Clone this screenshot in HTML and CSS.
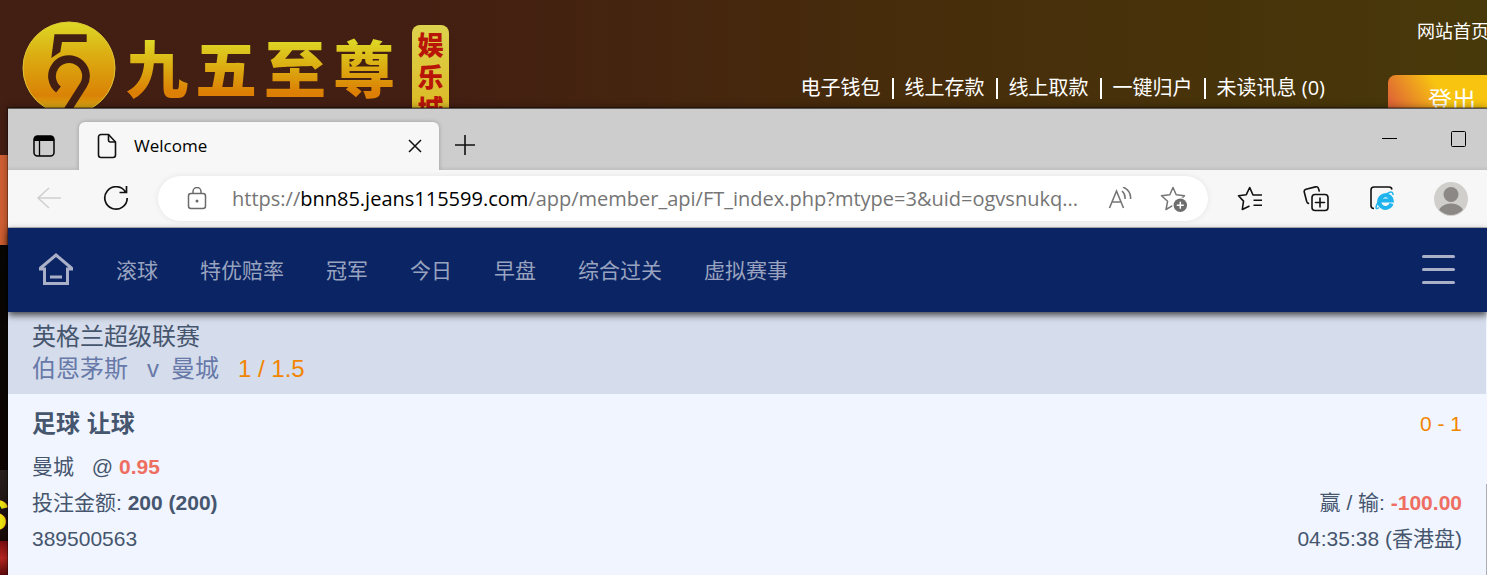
FILE: index.html
```html
<!DOCTYPE html>
<html lang="zh-CN">
<head>
  <meta charset="UTF-8" />
  <meta name="viewport" content="width=device-width, initial-scale=1.0"/>
  <title>Welcome</title>
  <link rel="stylesheet" href="styles.css">
</head>
<body>
  <!-- site behind the window -->
  <header class="site-header">
    <div class="logo">
      <svg class="logo-mark" viewBox="0 0 94 94" aria-hidden="true">
        <defs>
          <linearGradient id="gold" x1="0" y1="0" x2="0" y2="1">
            <stop offset="0" stop-color="#ddd926"/>
            <stop offset="0.35" stop-color="#dcae12"/>
            <stop offset="0.8" stop-color="#da8205"/>
            <stop offset="1" stop-color="#dbbd1c"/>
          </linearGradient>
        </defs>
        <circle cx="47" cy="47" r="46" fill="url(#gold)" stroke="#dfc636" stroke-width="1"/>
        <path d="M32.500 13.300H64.700V21H40L38.300 31L29.300 37z" fill="#431e12"/>
        <path d="M36.500 68.500A17 17 0 1 1 61.500 64L43 93" fill="none" stroke="#431e12" stroke-width="7.700"/>
      </svg>
      <div class="logo-name"><span>九</span><span>五</span><span>至</span><span>尊</span></div>
      <div class="logo-tag"><span>娱</span><span>乐</span><span>城</span></div>
    </div>
    <div class="site-right">
      <a class="site-home" href="#">网站首页</a>
      <div class="account-row">
        <nav class="account-links">
          <a href="#">电子钱包</a>
          <a href="#">线上存款</a>
          <a href="#">线上取款</a>
          <a href="#">一键归户</a>
          <a href="#">未读讯息 (0)</a>
        </nav>
        <button class="logout" type="button">登出</button>
      </div>
    </div>
  </header>
  <div class="site-banner"></div>
  <div class="site-body">
    <div class="promo"><span>S</span></div>
    <div class="promo-foot"></div>
  </div>

  <!-- browser window -->
  <div class="window">
    <div class="tab-strip">
      <button class="tab-menu" type="button" aria-label="Tab actions">
        <svg width="22" height="22" viewBox="0 0 22 22">
          <rect x="1" y="1" width="20" height="20" rx="3.500" fill="none" stroke="#000" stroke-width="1.500"/>
          <path d="M1 6V4a3 3 0 0 1 3-3h14a3 3 0 0 1 3 3v2z"/>
          <path d="M6.500 6v15" stroke="#000" stroke-width="1.300"/>
        </svg>
      </button>
      <div class="tab">
        <svg width="20" height="26" viewBox="0 0 20 26" fill="none" stroke="#111" stroke-width="1.600" stroke-linejoin="round">
          <path d="M4 1.500H11.500L18.500 9V22a2.500 2.500 0 0 1-2.500 2.500H4A2.500 2.500 0 0 1 1.500 22V4A2.500 2.500 0 0 1 4 1.500z"/>
          <path d="M11.500 1.500V7a2 2 0 0 0 2 2h5"/>
        </svg>
        <span class="tab-title">Welcome</span>
        <button class="tab-close" type="button" aria-label="Close tab">
          <svg width="14" height="14" viewBox="0 0 14 14" stroke="#111" stroke-width="1.500"><path d="M1 1l12 12M13 1L1 13"/></svg>
        </button>
      </div>
      <button class="new-tab" type="button" aria-label="New tab">
        <svg width="22" height="22" viewBox="0 0 22 22" stroke="#111" stroke-width="1.600"><path d="M11 1v20M1 11h20"/></svg>
      </button>
      <div class="window-buttons">
        <button type="button" aria-label="Minimize">
          <svg width="16" height="16" viewBox="0 0 16 16" stroke="#000"><path d="M0 7.500h15"/></svg>
        </button>
        <button type="button" aria-label="Maximize">
          <svg width="16" height="16" viewBox="0 0 16 16" fill="none" stroke="#000"><rect x="0.500" y="0.500" width="14" height="15" rx="1"/></svg>
        </button>
      </div>
    </div>

    <div class="toolbar">
      <button class="tool back" type="button" aria-label="Back" disabled>
        <svg width="26" height="24" viewBox="0 0 26 24" fill="none" stroke="#cfcfcf" stroke-width="1.500"><path d="M25 11H2M13 1L2 11L13 21"/></svg>
      </button>
      <button class="tool reload" type="button" aria-label="Refresh">
        <svg width="26" height="26" viewBox="0 0 26 26" fill="none" stroke="#111" stroke-width="1.700"><path d="M22.500 6A11.200 11.200 0 1 0 24.200 12M23.500 0V6.500H16.500"/></svg>
      </button>
      <div class="address-bar">
        <svg width="20" height="24" viewBox="0 0 20 24" fill="none" stroke="#6b6b6b" stroke-width="1.500">
          <rect x="1.500" y="6.500" width="17" height="15" rx="2.500"/>
          <path d="M6 6.500V4.500a4 4 0 0 1 8 0v2"/>
          <circle cx="10" cy="14" r="1.500" fill="#6b6b6b" stroke="none"/>
        </svg>
        <div class="url">https://<b>bnn85.jeans115599.com</b>/app/member_api/FT_index.php?mtype=3&amp;uid=ogvsnukq...</div>
        <button class="bar-button" type="button" aria-label="Read aloud">
          <svg width="26" height="24" viewBox="0 0 26 24" fill="none" stroke="#757575" stroke-width="1.600">
            <path d="M2.500 21L9.500 4L16.500 21M5 15H14"/>
            <path d="M15 4Q18.500 7 18 12M16 0Q24.500 4 23.500 12"/>
          </svg>
        </button>
        <button class="bar-button" type="button" aria-label="Add to favorites">
          <svg width="28" height="28" viewBox="0 0 28 28">
            <path d="M13 2.500L16.200 9.800L24.500 10.700L18.500 16.300L20 24.500L13 20.300L6 24.500L7.600 16.300L1.500 10.700L9.800 9.800z" fill="none" stroke="#757575" stroke-width="1.500" stroke-linejoin="round"/>
            <circle cx="20.300" cy="20.300" r="8" fill="#fff"/>
            <circle cx="20.300" cy="20.300" r="6.700" fill="#6e6e6e"/>
            <path d="M20.300 16.800v7M16.800 20.300h7" stroke="#fff" stroke-width="1.500"/>
          </svg>
        </button>
      </div>
      <div class="tools">
        <button class="tool" type="button" aria-label="Favorites">
          <svg width="26" height="26" viewBox="0 0 26 26" fill="none" stroke="#111" stroke-width="1.600" stroke-linejoin="round">
            <path d="M12.500 20L5.300 23.500L6.500 15.100L1.500 9.800L9.300 8.700L12.700 1.500L16 9H25M16.500 14.300H25M16.500 19.300H25"/>
          </svg>
        </button>
        <button class="tool" type="button" aria-label="Collections">
          <svg width="26" height="26" viewBox="0 0 26 26" fill="none" stroke="#111" stroke-width="1.600" stroke-linecap="round">
            <path d="M5.500 17.500C4.500 17 4 16.500 3.700 15.500L1.300 6.200A2.500 2.500 0 0 1 3 3.200L12.500 0.900A2.500 2.500 0 0 1 15.500 2.600L16.200 5"/>
            <rect x="9" y="8.500" width="16" height="16" rx="3"/>
            <path d="M17 12v9M12.500 16.500h9"/>
          </svg>
        </button>
        <button class="tool" type="button" aria-label="Internet Explorer mode">
          <svg width="26" height="26" viewBox="0 0 26 26" fill="none">
            <path d="M5 22.500C3 22.500 2 21.500 2 19.500V4A3 3 0 0 1 5 1H20A3 3 0 0 1 23 3.500" stroke="#111" stroke-width="1.600"/>
            <path d="M22.500 17.500A6.300 6.300 0 1 1 22.700 14.500H11" stroke="#1fb4ee" stroke-width="4"/>
            <path d="M10 21.500C5.500 25 6 19.500 12 12.500C17.500 6.500 24.500 3.500 24 9" stroke="#1fb4ee" stroke-width="1.500"/>
          </svg>
        </button>
        <button class="tool profile" type="button" aria-label="Profile">
          <svg width="34" height="34" viewBox="0 0 34 34">
            <defs><clipPath id="face"><circle cx="17" cy="17" r="16"/></clipPath></defs>
            <circle cx="17" cy="17" r="17" fill="#d1cfcc"/>
            <g fill="#8c8885" clip-path="url(#face)"><circle cx="17" cy="12.500" r="7.500"/><ellipse cx="17" cy="32" rx="13" ry="10.500"/></g>
          </svg>
        </button>
      </div>
    </div>

    <div class="page">
      <nav class="main-nav">
        <a class="home" href="#" aria-label="首页">
          <svg width="36" height="34" viewBox="0 0 36 34" fill="none" stroke="#a9b0c8" stroke-width="3">
            <path d="M1 16H6.500V30.500H29.500V16H35M2 15.500L18 2L34 15.500M12 24H24"/>
          </svg>
        </a>
        <a href="#">滚球</a>
        <a href="#">特优赔率</a>
        <a href="#">冠军</a>
        <a href="#">今日</a>
        <a href="#">早盘</a>
        <a href="#">综合过关</a>
        <a href="#">虚拟赛事</a>
        <button class="menu" type="button" aria-label="菜单"><i></i><i></i><i></i></button>
      </nav>

      <section class="match">
        <div class="league">英格兰超级联赛</div>
        <div class="teams"><span>伯恩茅斯</span><span>v</span><span>曼城</span><span class="line">1 / 1.5</span></div>
      </section>

      <section class="bet">
        <div class="row bet-title"><h2>足球 让球</h2><span class="score">0 - 1</span></div>
        <div class="row"><span class="pick">曼城 <span>@ <b class="red">0.95</b></span></span></div>
        <div class="row"><span>投注金额: <b>200 (200)</b></span><span>赢 / 输: <b class="red">-100.00</b></span></div>
        <div class="row"><span>389500563</span><span>04:35:38 (香港盘)</span></div>
      </section>
      <div class="scroll-thumb"></div>
    </div>
  </div>
</body>
</html>
```
FILE: styles.css
```css
* {
  margin: 0;
  padding: 0;
  box-sizing: border-box;
}

body {
  position: relative;
  height: 100vh;
  overflow: hidden;
  display: flex;
  flex-direction: column;
  background-color: #0a0603;
  font-family: "Liberation Sans", "Noto Sans CJK SC", sans-serif;
}

a {
  color: inherit;
  text-decoration: none;
}

button {
  border: none;
  background: none;
  font: inherit;
  color: inherit;
}

svg {
  display: block;
  flex: none;
}

/* site behind */
.site-header {
  height: 155px;
  flex: none;
  display: flex;
  justify-content: space-between;
  align-items: flex-start;
  padding-left: 22px;
  background: linear-gradient(to right, #431e12 0%, #431e12 28%, #472d0b 62%, #48390a 100%);
  color: #fff;
}

.logo {
  display: flex;
  align-items: flex-start;
  padding-top: 21px;
}

.logo-mark {
  width: 94px;
  height: 94px;
}

.logo-name {
  display: flex;
  gap: 7px;
  margin-left: 10px;
  padding-top: 12px;
  font-family: "Noto Sans CJK SC", sans-serif;
  font-size: 62px;
  font-weight: 900;
  line-height: 66px;
}

.logo-name span {
  background: linear-gradient(#ddd926 10%, #dcae12 50%, #dc7f04 90%);
  -webkit-background-clip: text;
  background-clip: text;
  color: transparent;
}

.logo-tag {
  display: flex;
  flex-direction: column;
  align-items: center;
  width: 37px;
  margin-left: 17px;
  margin-top: 4px;
  padding: 3px 0;
  border-radius: 8px;
  background: linear-gradient(#ddd34e, #dcb41c);
  color: #b81408;
  font-family: "Noto Sans CJK SC", sans-serif;
  font-size: 26px;
  font-weight: 900;
  line-height: 32px;
}

.site-right {
  display: flex;
  flex-direction: column;
  align-items: flex-end;
  margin-right: -29px;
  padding-top: 20px;
  white-space: nowrap;
}

.site-home {
  padding-right: 27px;
  font-size: 18px;
  line-height: 24px;
}

.account-row {
  display: flex;
  align-items: flex-start;
  gap: 63px;
  margin-top: 31px;
}

.account-links {
  display: flex;
  align-items: center;
  font-family: "Open Sans", "Noto Sans CJK SC", sans-serif;
  font-size: 20px;
  line-height: 26px;
}

.account-links a + a {
  display: flex;
  align-items: center;
}

.account-links a + a::before {
  content: "";
  width: 2px;
  height: 21px;
  margin: 0 11px;
  background-color: #fff;
}

.logout {
  width: 128px;
  height: 46px;
  padding-left: 40px;
  border-radius: 8px;
  background: linear-gradient(60deg, #de6535 8%, #f8c410 45%);
  text-align: left;
  font-size: 24px;
}

.site-banner {
  height: 90px;
  flex: none;
  background-color: #d06032;
}

.site-body {
  flex: 1;
  display: flex;
  flex-direction: column;
  justify-content: flex-end;
  width: 8px;
  overflow: hidden;
  background: linear-gradient(#080704, #100302);
}

.promo {
  height: 71px;
  display: flex;
  justify-content: flex-end;
  align-items: flex-end;
  background: linear-gradient(#2a2020, #170907);
  color: #f0e410;
  font-size: 44px;
  font-weight: bold;
  font-style: italic;
  line-height: 50px;
}

.promo-foot {
  height: 34px;
  background: linear-gradient(#7c0d12, #b82621 50%, #5c090b);
}

/* floating window */
.window {
  position: absolute;
  inset: 108px 0 0 8px;
  display: flex;
  flex-direction: column;
  border-top: 1px solid #5b5654;
  box-shadow: 0 0 8px rgba(0, 0, 0, 0.4), 0 0 0 1px rgba(0, 0, 0, 0.3);
  background-color: #f7f7f7;
}

.tab-strip {
  display: flex;
  align-items: flex-end;
  height: 61px;
  background: linear-gradient(#cdcdcd 57px, #bfbfbf);
  overflow: hidden;
}

.tab-menu {
  width: 71px;
  padding: 0 0 13px 25px;
}

.tab {
  position: relative;
  display: flex;
  align-items: center;
  width: 360px;
  height: 48px;
  padding: 0 17px 0 18px;
  border-radius: 6px 6px 0 0;
  background-color: #f7f7f7;
  box-shadow: 0 0 4px rgba(0, 0, 0, 0.25);
}

.tab-title {
  flex: 1;
  margin-left: 17px;
  font-family: "Open Sans", "Noto Sans", sans-serif;
  font-size: 17px;
  line-height: 24px;
}

.new-tab {
  padding: 0 15px 14px;
}

.window-buttons {
  display: flex;
  align-self: flex-start;
  margin-left: auto;
  margin-right: -6px;
}

.window-buttons button {
  display: flex;
  justify-content: center;
  align-items: center;
  width: 69px;
  height: 60px;
}

.toolbar {
  display: flex;
  align-items: center;
  height: 58px;
  border-bottom: 1px solid #bdbdbd;
}

.tool {
  display: flex;
  justify-content: center;
  align-items: center;
  width: 66px;
  height: 48px;
}

.back {
  width: 82px;
}

.reload {
  width: 52px;
}

.address-bar {
  flex: 1;
  min-width: 0;
  display: flex;
  align-items: center;
  height: 45px;
  margin-left: 16px;
  padding: 0 20px 0 29px;
  border-radius: 23px;
  background-color: #fff;
  box-shadow: 0 0 6px rgba(0, 0, 0, 0.08);
}

.url {
  flex: 1;
  min-width: 0;
  margin-left: 25px;
  overflow: hidden;
  white-space: nowrap;
  color: #757575;
  font-family: "Open Sans", "Noto Sans", sans-serif;
  font-size: 20px;
  line-height: 28px;
}

.url b {
  color: #000;
  font-weight: normal;
}

.bar-button {
  margin-left: 27px;
}

.tools {
  display: flex;
  margin-left: 9px;
}

.profile {
  width: 72px;
}

/* page in the window */
.page {
  position: relative;
  flex: 1;
  background-color: #f0f5ff;
  color: #46566e;
  font-size: 21px;
}

.main-nav {
  position: relative;
  display: flex;
  align-items: center;
  gap: 42px;
  height: 84px;
  padding: 0 32px 3px 30px;
  background-color: #0b2463;
  box-shadow: 0 3px 7px rgba(0, 0, 0, 0.7);
  color: #99a3bf;
}

.home {
  padding-top: 3px;
}

.menu {
  display: flex;
  flex-direction: column;
  gap: 10px;
  width: 33px;
  margin-left: auto;
  padding-top: 2px;
}

.menu i {
  height: 3px;
  border-radius: 2px;
  background-color: #a9b0c8;
}

.match {
  margin-right: 1px;
  padding: 9px 24px;
  background-color: #d5dceb;
  font-size: 24px;
  line-height: 32px;
}

.teams {
  display: flex;
  color: #6779a8;
}

.teams span + span {
  margin-left: 19px;
}

.teams span:nth-child(3) {
  margin-left: 12px;
}

.teams .line,
.score {
  color: #f28500;
}

.bet {
  padding: 12px 25px 12px 24px;
}

.row {
  display: flex;
  justify-content: space-between;
  line-height: 36px;
}

.bet-title {
  margin-bottom: 7px;
}

.bet-title h2 {
  font-size: 24px;
}

.pick span {
  margin-left: 12px;
}

.red {
  color: #ee6e62;
}

.scroll-thumb {
  position: absolute;
  right: 0;
  bottom: 0;
  width: 1px;
  height: 91px;
  background-color: #a9adb5;
}
```
